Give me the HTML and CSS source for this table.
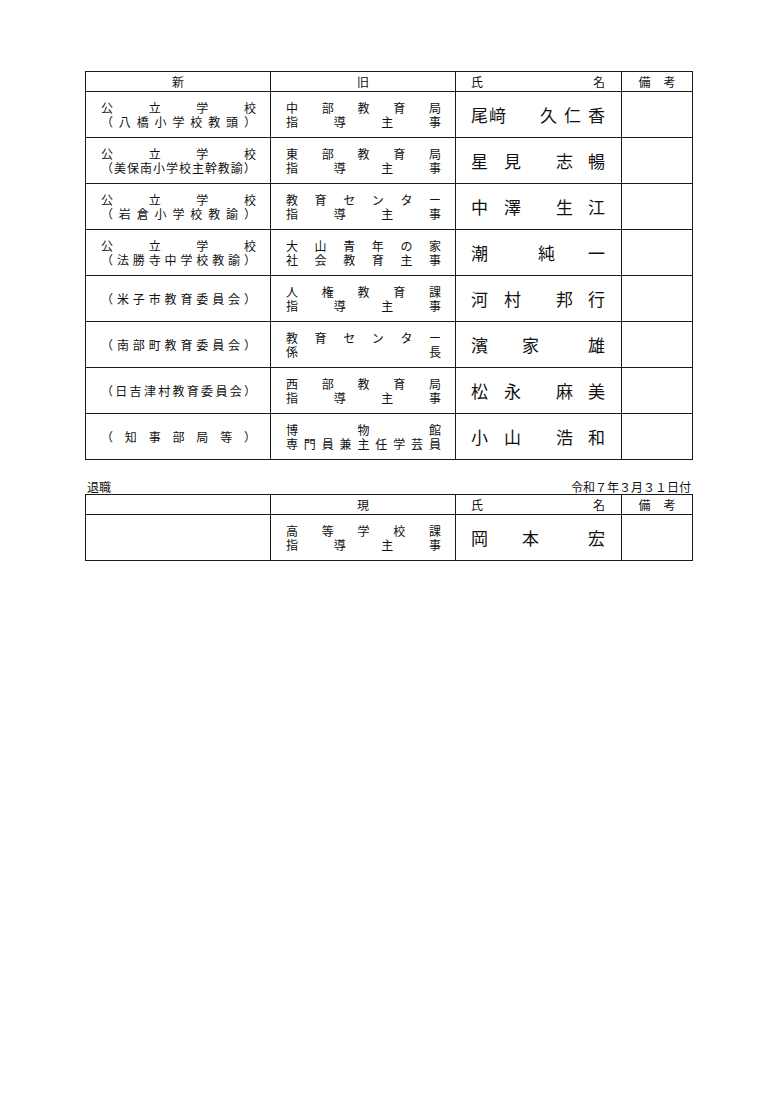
FILE: index.html
```html
<!DOCTYPE html>
<html lang="ja">
<head>
<meta charset="utf-8">
<title>人事異動</title>
<link rel="stylesheet" href="styles.css">
</head>
<body>
<div class="page">
  <div class="grid">
    <div class="cell head">新</div>
    <div class="cell head">旧</div>
    <div class="cell head head-name"><span>氏</span><span>名</span></div>
    <div class="cell head head-note"><span>備</span><span>考</span></div>

    <div class="cell pos c1">
      <div class="line"><span>公</span><span>立</span><span>学</span><span>校</span></div>
      <div class="line"><span>（</span><span>八</span><span>橋</span><span>小</span><span>学</span><span>校</span><span>教</span><span>頭</span><span>）</span></div>
    </div>
    <div class="cell pos c2">
      <div class="line"><span>中</span><span>部</span><span>教</span><span>育</span><span>局</span></div>
      <div class="line"><span>指</span><span>導</span><span>主</span><span>事</span></div>
    </div>
    <div class="cell namecell"><div class="name"><span class="grp g1"><span>尾</span><span>﨑</span></span><span class="grp g7"><span>久</span><span>仁</span><span>香</span></span></div></div>
    <div class="cell"></div>

    <div class="cell pos c1">
      <div class="line"><span>公</span><span>立</span><span>学</span><span>校</span></div>
      <div class="line"><span>（</span><span>美</span><span>保</span><span>南</span><span>小</span><span>学</span><span>校</span><span>主</span><span>幹</span><span>教</span><span>諭</span><span>）</span></div>
    </div>
    <div class="cell pos c2">
      <div class="line"><span>東</span><span>部</span><span>教</span><span>育</span><span>局</span></div>
      <div class="line"><span>指</span><span>導</span><span>主</span><span>事</span></div>
    </div>
    <div class="cell namecell"><div class="name"><span class="grp g16"><span>星</span><span>見</span></span><span class="grp g15"><span>志</span><span>暢</span></span></div></div>
    <div class="cell"></div>

    <div class="cell pos c1">
      <div class="line"><span>公</span><span>立</span><span>学</span><span>校</span></div>
      <div class="line"><span>（</span><span>岩</span><span>倉</span><span>小</span><span>学</span><span>校</span><span>教</span><span>諭</span><span>）</span></div>
    </div>
    <div class="cell pos c2">
      <div class="line"><span>教</span><span>育</span><span>セ</span><span>ン</span><span>タ</span><span>ー</span></div>
      <div class="line"><span>指</span><span>導</span><span>主</span><span>事</span></div>
    </div>
    <div class="cell namecell"><div class="name"><span class="grp g16"><span>中</span><span>澤</span></span><span class="grp g15"><span>生</span><span>江</span></span></div></div>
    <div class="cell"></div>

    <div class="cell pos c1">
      <div class="line"><span>公</span><span>立</span><span>学</span><span>校</span></div>
      <div class="line"><span>（</span><span>法</span><span>勝</span><span>寺</span><span>中</span><span>学</span><span>校</span><span>教</span><span>諭</span><span>）</span></div>
    </div>
    <div class="cell pos c2">
      <div class="line"><span>大</span><span>山</span><span>青</span><span>年</span><span>の</span><span>家</span></div>
      <div class="line"><span>社</span><span>会</span><span>教</span><span>育</span><span>主</span><span>事</span></div>
    </div>
    <div class="cell namecell"><div class="name"><span class="grp"><span>潮</span></span><span class="grp g33"><span>純</span><span>一</span></span></div></div>
    <div class="cell"></div>

    <div class="cell pos c1">
      <div class="line"><span>（</span><span>米</span><span>子</span><span>市</span><span>教</span><span>育</span><span>委</span><span>員</span><span>会</span><span>）</span></div>
    </div>
    <div class="cell pos c2">
      <div class="line"><span>人</span><span>権</span><span>教</span><span>育</span><span>課</span></div>
      <div class="line"><span>指</span><span>導</span><span>主</span><span>事</span></div>
    </div>
    <div class="cell namecell"><div class="name"><span class="grp g16"><span>河</span><span>村</span></span><span class="grp g15"><span>邦</span><span>行</span></span></div></div>
    <div class="cell"></div>

    <div class="cell pos c1">
      <div class="line"><span>（</span><span>南</span><span>部</span><span>町</span><span>教</span><span>育</span><span>委</span><span>員</span><span>会</span><span>）</span></div>
    </div>
    <div class="cell pos c2">
      <div class="line"><span>教</span><span>育</span><span>セ</span><span>ン</span><span>タ</span><span>ー</span></div>
      <div class="line"><span>係</span><span>長</span></div>
    </div>
    <div class="cell namecell"><div class="name"><span class="grp"><span>濱</span></span><span class="grp g49"><span>家</span><span>雄</span></span></div></div>
    <div class="cell"></div>

    <div class="cell pos c1">
      <div class="line"><span>（</span><span>日</span><span>吉</span><span>津</span><span>村</span><span>教</span><span>育</span><span>委</span><span>員</span><span>会</span><span>）</span></div>
    </div>
    <div class="cell pos c2">
      <div class="line"><span>西</span><span>部</span><span>教</span><span>育</span><span>局</span></div>
      <div class="line"><span>指</span><span>導</span><span>主</span><span>事</span></div>
    </div>
    <div class="cell namecell"><div class="name"><span class="grp g16"><span>松</span><span>永</span></span><span class="grp g15"><span>麻</span><span>美</span></span></div></div>
    <div class="cell"></div>

    <div class="cell pos c1">
      <div class="line"><span>（</span><span>知</span><span>事</span><span>部</span><span>局</span><span>等</span><span>）</span></div>
    </div>
    <div class="cell pos c2">
      <div class="line"><span>博</span><span>物</span><span>館</span></div>
      <div class="line"><span>専</span><span>門</span><span>員</span><span>兼</span><span>主</span><span>任</span><span>学</span><span>芸</span><span>員</span></div>
    </div>
    <div class="cell namecell"><div class="name"><span class="grp g16"><span>小</span><span>山</span></span><span class="grp g15"><span>浩</span><span>和</span></span></div></div>
    <div class="cell"></div>
  </div>

  <div class="caption"><span>退職</span><span>令和７年３月３１日付</span></div>

  <div class="grid">
    <div class="cell head"></div>
    <div class="cell head">現</div>
    <div class="cell head head-name"><span>氏</span><span>名</span></div>
    <div class="cell head head-note"><span>備</span><span>考</span></div>

    <div class="cell"></div>
    <div class="cell pos c2">
      <div class="line"><span>高</span><span>等</span><span>学</span><span>校</span><span>課</span></div>
      <div class="line"><span>指</span><span>導</span><span>主</span><span>事</span></div>
    </div>
    <div class="cell namecell"><div class="name"><span class="grp"><span>岡</span></span><span class="grp g49"><span>本</span><span>宏</span></span></div></div>
    <div class="cell"></div>
  </div>
</div>
</body>
</html>
```

FILE: styles.css
```css
html, body {
  margin: 0;
  padding: 0;
  background: #ffffff;
}

body {
  font-family: "Noto Sans CJK JP", "Noto Sans", sans-serif;
  color: #111111;
  font-size: 12px;
}

.page {
  width: 780px;
  padding: 71px 0 0 85px;
  box-sizing: border-box;
}

.grid {
  display: grid;
  grid-template-columns: 185px 185px 166px 71px;
  grid-template-rows: 20px;
  grid-auto-rows: 46px;
  width: 608px;
  box-sizing: border-box;
  border-top: 1px solid #1a1a1a;
  border-left: 1px solid #1a1a1a;
}

.cell {
  box-sizing: border-box;
  border-right: 1px solid #1a1a1a;
  border-bottom: 1px solid #1a1a1a;
  min-width: 0;
}

.head {
  display: flex;
  align-items: center;
  justify-content: center;
  font-size: 12px;
  line-height: 14px;
}

.head-name {
  justify-content: space-between;
  padding: 0 16px 0 15px;
}

.head-note {
  gap: 13px;
}

.pos {
  display: flex;
  flex-direction: column;
  justify-content: center;
  font-size: 12px;
  line-height: 14px;
}

.c1 {
  padding: 0 14px 0 15px;
}

.c2 {
  padding: 0 14px 0 15px;
}

.line {
  display: flex;
  justify-content: space-between;
}

.namecell {
  display: flex;
  align-items: center;
  padding: 0 16px 0 15px;
}

.name {
  flex: 1;
  display: flex;
  justify-content: space-between;
  font-size: 17px;
  line-height: 20px;
  padding-top: 1px;
}

.grp {
  display: flex;
}

.g1 { gap: 1px; }
.g7 { gap: 7px; }
.g15 { gap: 15px; }
.g16 { gap: 16px; }
.g33 { gap: 33px; }
.g49 { gap: 49px; }

.caption {
  width: 608px;
  box-sizing: border-box;
  display: flex;
  justify-content: space-between;
  margin-top: 20px;
  padding: 0 2px 0 2px;
  font-size: 12px;
  line-height: 14px;
}
```
